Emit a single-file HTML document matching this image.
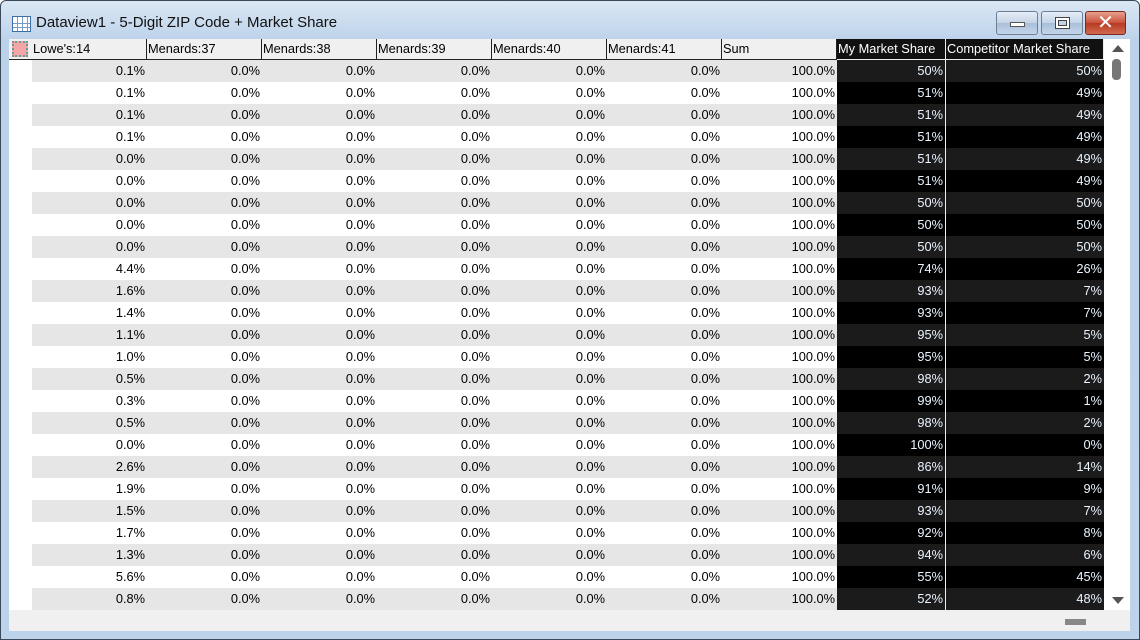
<!DOCTYPE html>
<html><head><meta charset="utf-8"><style>
*{margin:0;padding:0;box-sizing:border-box}
body{width:1140px;height:640px;overflow:hidden;background:#fff;font-family:"Liberation Sans","DejaVu Sans",sans-serif;position:relative}
.frame{position:absolute;left:0;top:0;width:1140px;height:640px;border:1px solid #3a4a5a;border-radius:6px 6px 0 0;background:linear-gradient(#dbe7f4,#bcd2ea 40px,#bcd3ea)}
.title{position:absolute;left:36px;top:14px;font-size:15px;color:#111}
.ticon{position:absolute;left:12px;top:16px;width:19px;height:16px;border:1px solid #3c6ea5;background:repeating-linear-gradient(90deg,#fff 0 4px,#7a9cc4 4px 5px);}
.ticon:after{content:"";position:absolute;left:0;right:0;top:3px;bottom:0;background:repeating-linear-gradient(#0000 0 3px,#7a9cc4 3px 4px)}
.btn{position:absolute;top:11px;height:24px;border:1px solid #6d7f95;border-radius:3px;background:linear-gradient(#e6eef8,#c3d3e6 50%,#a9bfd9 51%,#c4d5ea)}
.close{background:linear-gradient(#e8a090,#c9503a 50%,#b83a22 51%,#d06a50);border-color:#7a2a20}
.content{position:absolute;left:9px;top:39px;width:1121px;height:592px;background:#f0f0f0}
.hdr{position:absolute;top:0;height:22px;font-size:12.8px;line-height:20px;padding-left:1px;border-right:1px solid #222;border-bottom:1px solid #222;background:#f0f0f0;color:#000;white-space:nowrap}
.hdr.d{background:#111;color:#fff;border-right:1px solid #eee;border-bottom:1px solid #eee}
.rows{position:absolute;left:0;top:21px;width:1095px}
.r{height:22px;position:relative;font-size:12.8px;line-height:22px}
.r div{position:absolute;top:0;height:22px;text-align:right;padding-right:2px}
.rn{left:0;width:23px;background:#fff}
.sb{position:absolute;left:1095px;top:0;width:26px;height:571px;background:#fff}
</style></head><body>
<div class="frame"></div>
<div class="ticon"></div>
<div class="title">Dataview1 - 5-Digit ZIP Code + Market Share</div>
<div class="btn" style="left:996px;width:42px"><div style="position:absolute;left:13px;top:10px;width:15px;height:5px;background:#fff;border:1px solid #555"></div></div>
<div class="btn" style="left:1041px;width:42px"><div style="position:absolute;left:13px;top:5px;width:15px;height:12px;border:1px solid #444;background:#fff"><div style="margin:2px;height:6px;border:1px solid #444;background:#c3d3e6"></div></div></div>
<div class="btn close" style="left:1085px;width:41px;color:#fff;font-size:20px;font-weight:bold;text-align:center;line-height:22px">✕</div>
<div class="content">
<div class="hdr" style="left:0;width:23px;height:21px;border-bottom:1px solid #222;border-right:none"><div style="position:absolute;left:3px;top:2px;width:16px;height:16px;background:#f4a6a6;border:2px dotted #6a9a9a"></div></div>
<div class="hdr" style="left:23px;width:115px;height:21px">Lowe's:14</div>
<div class="hdr" style="left:138px;width:115px;height:21px">Menards:37</div>
<div class="hdr" style="left:253px;width:115px;height:21px">Menards:38</div>
<div class="hdr" style="left:368px;width:115px;height:21px">Menards:39</div>
<div class="hdr" style="left:483px;width:115px;height:21px">Menards:40</div>
<div class="hdr" style="left:598px;width:115px;height:21px">Menards:41</div>
<div class="hdr" style="left:713px;width:115px;height:21px">Sum</div>
<div class="hdr d" style="left:828px;width:109px;height:21px">My Market Share</div>
<div class="hdr d" style="left:937px;width:158px;height:21px">Competitor Market Share</div>
<div class="rows" id="rows">
</div>
<div class="sb"><div style="position:absolute;left:8px;top:6px;border:6px solid transparent;border-bottom:7px solid #555;border-top:none"></div><div style="position:absolute;left:8px;top:20px;width:9px;height:21px;background:#777;border-radius:4px"></div><div style="position:absolute;left:8px;top:558px;border:6px solid transparent;border-top:7px solid #555;border-bottom:none"></div></div>
<div style="position:absolute;left:1056px;top:580px;width:21px;height:6px;background:#888"></div>
</div>
<script>
var d=[[0.1,50],[0.1,51],[0.1,51],[0.1,51],[0.0,51],[0.0,51],[0.0,50],[0.0,50],[0.0,50],[4.4,74],[1.6,93],[1.4,93],[1.1,95],[1.0,95],[0.5,98],[0.3,99],[0.5,98],[0.0,100],[2.6,86],[1.9,91],[1.5,93],[1.7,92],[1.3,94],[5.6,55],[0.8,52]];
var h="";d.forEach(function(x,i){var bg=i%2?"#fff":"#e6e6e6",dk=i%2?"#000":"#1b1b1b";
h+='<div class="r"><div class="rn"></div>';
var v=[x[0].toFixed(1)+"%","0.0%","0.0%","0.0%","0.0%","0.0%","100.0%"];
for(var j=0;j<7;j++)h+='<div style="left:'+(23+115*j)+'px;width:115px;background:'+bg+'">'+v[j]+'</div>';
h+='<div style="left:828px;width:109px;background:'+dk+';color:#eaf4ff;border-right:1px solid #eee">'+x[1]+'%</div>';
h+='<div style="left:937px;width:158px;background:'+dk+';color:#eaf4ff">'+(100-x[1])+'%</div></div>';});
document.getElementById("rows").innerHTML=h;
</script>
</body></html>
